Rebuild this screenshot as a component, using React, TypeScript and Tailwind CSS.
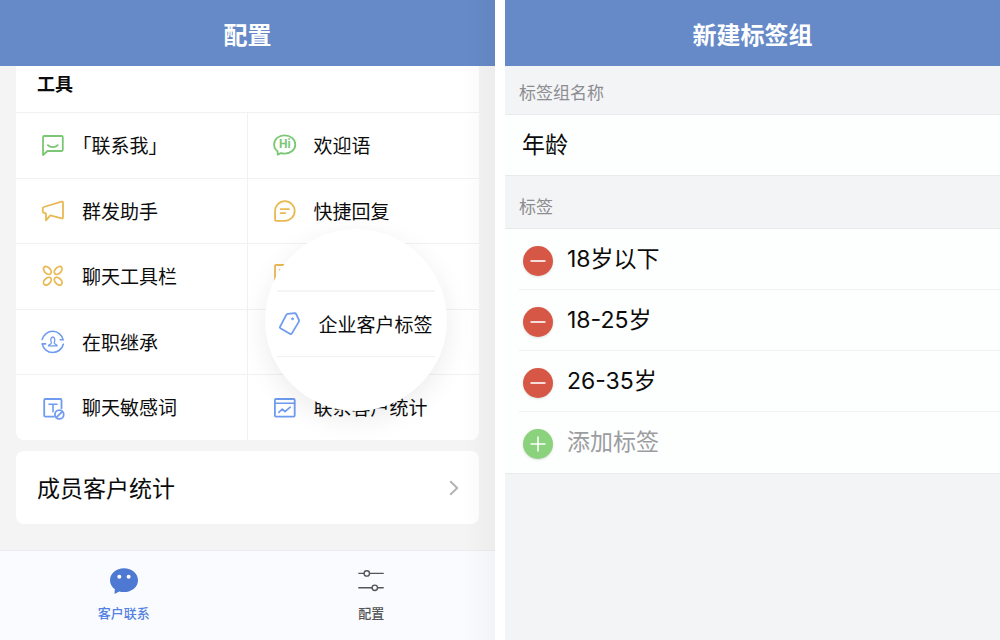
import type { ReactNode } from "react";

function Icon({ className, children }: { className: string; children: ReactNode }) {
  return (
    <svg
      viewBox="0 0 24 24"
      aria-hidden="true"
      className={`size-6 shrink-0 ${className}`}
      fill="none"
      stroke="currentColor"
      strokeWidth="1.8"
      strokeLinecap="round"
      strokeLinejoin="round"
    >
      {children}
    </svg>
  );
}

const GREEN = "text-[#7ac774]";
const YELLOW = "text-[#e9b954]";
const BLUE = "text-[#6f9cf0]";

const contactIcon = (
  <Icon className={GREEN}>
    <path d="M2 22V4.2Q2 3 3.2 3H20.6Q21.8 3 21.8 4.2V16.8Q21.8 18 20.6 18H6.6Z" />
    <path d="M6.8 12.1C9.4 14.8 14.2 14.8 16.8 12.1" />
  </Icon>
);

const welcomeIcon = (
  <Icon className={GREEN}>
    <path d="M4.6 18.3C2.4 16.6 1.1 14 1.1 11.4C1.1 6.2 5.8 2.3 11.6 2.3S22.3 6.2 22.3 11.4S17.5 20.6 11.6 20.6Q9.6 20.6 7.9 20.1L4.7 21.6Z" />
    <text
      x="11.8"
      y="15.4"
      textAnchor="middle"
      fill="currentColor"
      stroke="none"
      className="font-['Roboto',sans-serif] text-[12px] font-bold"
    >
      Hi
    </text>
  </Icon>
);

const megaphoneIcon = (
  <Icon className={YELLOW}>
    <path d="M2.8 8L20.6 2.7Q22 2.3 22 3.7V18.3Q22 19.8 20.6 19.4L9.3 16.3L5 21.4V14.6L2.7 13.7Q1.8 13.3 1.8 12.4V9.2Q1.8 8.3 2.8 8Z" />
  </Icon>
);

const replyIcon = (
  <Icon className={YELLOW}>
    <path d="M2.1 20.9V12A9.8 9.8 0 1 1 11.9 21.8H3Q2.1 21.8 2.1 20.9Z" />
    <path d="M7.6 10.2H16M7.6 14.2H12.2" />
  </Icon>
);

const toolbarIcon = (
  <Icon className={YELLOW}>
    <ellipse cx="6.4" cy="6.4" rx="4.6" ry="3" transform="rotate(45 6.4 6.4)" />
    <ellipse cx="17.2" cy="6.4" rx="4.6" ry="3" transform="rotate(-45 17.2 6.4)" />
    <ellipse cx="6.4" cy="17.2" rx="4.6" ry="3" transform="rotate(-45 6.4 17.2)" />
    <ellipse cx="17.2" cy="17.2" rx="4.6" ry="3" transform="rotate(45 17.2 17.2)" />
  </Icon>
);

const albumIcon = (
  <Icon className={YELLOW}>
    <rect x="2" y="1" width="19.8" height="20.4" rx="1" />
    <circle cx="6.8" cy="5.8" r="0.5" fill="currentColor" strokeWidth="0.6" />
  </Icon>
);

const inheritIcon = (
  <Icon className={BLUE}>
    <path strokeWidth="1.6" d="M1.2 9.4A10.8 10.8 0 0 1 22.2 9.8H19.2" />
    <path strokeWidth="1.6" d="M22.3 14.2A10.8 10.8 0 0 1 1.2 13.9H4.6" />
    <path
      strokeWidth="1.3"
      d="M7.4 15.9H16.2C16.2 14.2 13.1 14.4 13.1 12.8C14.3 11 14 7 11.8 7S9.3 11 10.5 12.8C10.5 14.4 7.4 14.2 7.4 15.9Z"
    />
  </Icon>
);

const wordIcon = (
  <Icon className={BLUE}>
    <path d="M12.6 20.7H4.4Q3.2 20.7 3.2 19.5V4.2Q3.2 3 4.4 3H19.3Q20.5 3 20.5 4.2V12.4" />
    <path strokeWidth="1.6" d="M8 8.3H16M12 8.3V15.8" />
    <circle cx="18.3" cy="18.5" r="4.4" />
    <path d="M15.4 21.4L21.2 15.6" />
  </Icon>
);

const statsIcon = (
  <Icon className={BLUE}>
    <rect x="1.9" y="3" width="19.8" height="17.6" rx="1" />
    <path strokeWidth="1.6" d="M2 7.3H21.6M5.8 16.4L9.3 13L12 15.6L17.2 11.2" />
  </Icon>
);

const tagIcon = (
  <Icon className={BLUE}>
    <path d="M10.6 1.8L17.8 1.2Q18.8 1.2 19.2 2.1L22 8.2Q22.3 9 21.9 9.6L14.7 21.6Q14.1 22.5 13.2 22L3.4 16.2Q2.5 15.7 3 14.8L9.4 2.6Q9.8 1.9 10.6 1.8Z" />
    <circle cx="15.5" cy="6.8" r="1" fill="currentColor" strokeWidth="0.8" />
  </Icon>
);

function Tool({ icon, label, left }: { icon: ReactNode; label: string; left?: boolean }) {
  return (
    <button
      type="button"
      className={`flex items-center gap-[17px] border-t border-[#f1f1f1] pl-[25px] text-left text-[19px] whitespace-nowrap [text-spacing-trim:trim-start] ${left ? "border-r" : ""}`}
    >
      {icon}
      {label}
    </button>
  );
}

function Header({ title }: { title: string }) {
  return (
    <header className="flex h-[66px] items-center justify-center bg-[#668ac8] pt-0.5">
      <h1 className="text-2xl font-bold text-white">{title}</h1>
    </header>
  );
}

function ConfigScreen() {
  return (
    <section className="relative flex flex-1 flex-col bg-[#f4f4f4]">
      <Header title="配置" />
      <main className="flex flex-col gap-[11px] px-4 pb-6">
        <div className="rounded-b-lg bg-white">
          <h2 className="flex h-[46px] items-center pb-3 pl-[21px] text-lg font-bold">工具</h2>
          <div className="grid h-[328px] grid-cols-2 grid-rows-5">
            <Tool icon={contactIcon} label="「联系我」" left />
            <Tool icon={welcomeIcon} label="欢迎语" />
            <Tool icon={megaphoneIcon} label="群发助手" left />
            <Tool icon={replyIcon} label="快捷回复" />
            <Tool icon={toolbarIcon} label="聊天工具栏" left />
            <Tool icon={albumIcon} label="" />
            <Tool icon={inheritIcon} label="在职继承" left />
            <div className="relative border-t border-[#f1f1f1]">
              <div className="absolute -top-[81px] left-[17px] z-10 size-[182px] overflow-hidden rounded-full bg-white px-3 pt-[61px] shadow-[0_8px_28px_rgba(0,0,0,0.08)]">
                <button
                  type="button"
                  className="flex h-[67px] w-full items-center gap-[18px] border-t-2 border-b border-t-[#f5f5f5] border-b-[#f1f1f1] text-[19px] whitespace-nowrap"
                >
                  {tagIcon}
                  企业客户标签
                </button>
              </div>
            </div>
            <Tool icon={wordIcon} label="聊天敏感词" left />
            <Tool icon={statsIcon} label="联系客户统计" />
          </div>
        </div>
        <button
          type="button"
          className="flex h-[73px] items-center justify-between rounded-lg bg-white pr-5 pl-[21px] text-[23px]"
        >
          成员客户统计
          <svg viewBox="0 0 10 16" aria-hidden="true" className="h-4 w-[10px]" fill="none" stroke="#b4b4b4" strokeWidth="2">
            <path d="M1.2 1.2L8.2 8L1.2 14.8" />
          </svg>
        </button>
      </main>
      <nav className="mt-auto grid h-[90px] grid-cols-2 border-t border-[#ececee] bg-[#fafbfe] text-[13px] font-medium">
        <a href="#contacts" className="flex flex-col items-center gap-2 pt-4 text-[#5481e2]">
          <svg viewBox="0 0 30 28" aria-hidden="true" className="h-7 w-[30px]">
            <path
              fill="#4e79d2"
              d="M15 1.3C22.8 1.3 29 6.6 29 13.2S22.8 25.1 15 25.1Q12.4 25.1 10.2 24.5L5.6 27Q5.4 24.4 5.9 22.3C2.8 20.1 1 16.9 1 13.2C1 6.6 7.2 1.3 15 1.3Z"
            />
            <circle cx="10.3" cy="9.7" r="2" fill="#fff" />
            <circle cx="19.6" cy="9.7" r="2" fill="#fff" />
          </svg>
          客户联系
        </a>
        <a href="#config" className="flex flex-col items-center gap-2 pt-4 text-[#555]">
          <svg viewBox="0 0 30 28" aria-hidden="true" className="h-7 w-[30px]" fill="none" stroke="#555" strokeWidth="1.4">
            <path d="M2.3 6.4H8M13.5 6.4H27.7M2.3 20.8H16M21.6 20.8H27.7" />
            <circle cx="10.8" cy="6.4" r="2.7" />
            <circle cx="18.8" cy="20.8" r="2.7" />
          </svg>
          配置
        </a>
      </nav>
      <div className="pointer-events-none absolute inset-y-0 right-0 w-8 bg-linear-to-r from-transparent to-black/3" />
    </section>
  );
}

function RoundMark({ className, d }: { className: string; d: string }) {
  return (
    <span className={`mt-[3px] flex size-[30px] shrink-0 items-center justify-center rounded-full shadow-sm ${className}`}>
      <svg viewBox="0 0 16 16" aria-hidden="true" className="size-4" fill="none" stroke="#fff" strokeWidth="1.6">
        <path d={d} />
      </svg>
    </span>
  );
}

const tags = ["18岁以下", "18-25岁", "26-35岁"];

function TagGroupScreen() {
  return (
    <section className="flex flex-1 flex-col bg-[#f3f4f6]">
      <Header title="新建标签组" />
      <label htmlFor="group-name" className="flex h-12 items-center pt-1 pl-[14px] text-[17px] text-[#8c8d90]">
        标签组名称
      </label>
      <input
        id="group-name"
        defaultValue="年龄"
        className="h-[62px] w-full border-y border-[#e9eaec] bg-[#fdfefe] pb-1 pl-[17px] text-[23px] outline-none"
      />
      <h2 className="flex h-[52px] items-center pt-2 pl-[14px] text-[17px] text-[#8c8d90]">标签</h2>
      <ul className="border-y border-[#e9eaec] bg-[#fdfefe] pl-[14px] font-['Inter','Noto_Sans_CJK_SC',sans-serif] text-[23px]">
        {tags.map((tag) => (
          <li key={tag} className="flex h-[61px] items-center gap-[14px] border-b border-[#eff1f3] pl-1">
            <button type="button" aria-label={`删除 ${tag}`} className="rounded-full">
              <RoundMark className="bg-[#d65745]" d="M0.5 8H15.5" />
            </button>
            {tag}
          </li>
        ))}
        <li>
          <button type="button" className="flex h-[61px] w-full items-center gap-[14px] pl-1 text-[#9c9da0]">
            <RoundMark className="bg-[#8bd27c]" d="M0.5 8H15.5M8 0.5V15.5" />
            添加标签
          </button>
        </li>
      </ul>
    </section>
  );
}

export default function App() {
  return (
    <div className="flex min-h-screen gap-[10px] bg-white font-['Noto_Sans_CJK_SC',sans-serif] text-[#0c0c0c]">
      <ConfigScreen />
      <TagGroupScreen />
    </div>
  );
}
